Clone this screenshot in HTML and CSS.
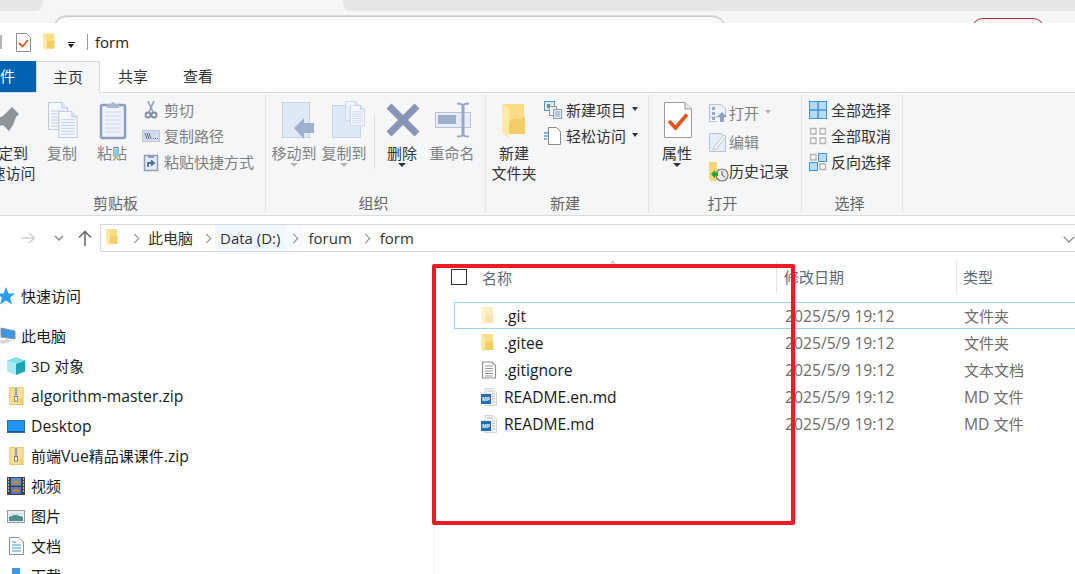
FILE: index.html
```html
<!DOCTYPE html>
<html lang="zh-CN">
<head>
<meta charset="utf-8">
<title>form</title>
<link rel="stylesheet" href="styles.css">
</head>
<body>
<svg class="defs" width="0" height="0" aria-hidden="true">
  <defs>
    <symbol id="folder" viewBox="0 0 24 34">
      <path d="M0 0H22V30H7V34L0 28Z" fill="#fcdd86"/>
      <path d="M9 15H19L23 13V30H7V20Z" fill="#f5cd68"/>
      <path d="M0 0L7 4V34L0 28Z" fill="#fee9a5"/>
    </symbol>
    <symbol id="zip" viewBox="0 0 15 19">
      <path d="M.5.5H14.500V18.500H.5Z" fill="#fbe08f" stroke="#e9c25e"/>
      <path d="M5 0H9V12H5Z" fill="#cfcfcf"/>
      <path d="M6 2H8M6 4H8M6 6H8M6 8H8" stroke="#777" stroke-width="1"/>
      <rect x="5.500" y="10" width="3" height="5" fill="#fff" stroke="#777"/>
      <path d="M11 12H14V18H11Z" fill="#f3cf6a"/>
    </symbol>
    <symbol id="doclines" viewBox="0 0 20 28">
      <path d="M.5.5H14L19.500 6V27.500H.5Z" fill="#f4f7fc" stroke="#bcc9e0"/>
      <path d="M14 .5V6H19.500" fill="#e2e9f5" stroke="#bcc9e0"/>
      <path d="M3 9H17M3 12H17M3 15H17M3 18H17M3 21H17M3 24H17" stroke="#c3cfe3"/>
    </symbol>
  </defs>
</svg>

<div class="chrome">
  <div class="chrome-tabs"><div class="ctab ctab-l"></div><div class="ctab ctab-r"></div></div>
  <div class="chrome-bar"><div class="omni"></div><div class="pill"></div></div>
</div>

<div class="titlebar">
  <span class="tb-stub"></span>
  <svg class="tb-prop" viewBox="0 0 15 19"><path d="M.5.5H10.500L14.500 4.500V18.500H.5Z" fill="#fff" stroke="#8f8f8f"/><path d="M3 10L6.500 13.500L12 7" fill="none" stroke="#e8541c" stroke-width="1.800"/></svg>
  <svg class="tb-folder"><use href="#folder"/></svg>
  <span class="tb-caret"></span>
  <span class="tb-sep"></span>
  <span class="tb-title">form</span>
</div>

<div class="tabs">
  <div class="tab tab-file"><span class="tab-file-text">文件</span></div>
  <div class="tab tab-active">主页</div>
  <div class="tab tab-share">共享</div>
  <div class="tab tab-view">查看</div>
</div>

<div class="ribbon">
  <section class="group g-clip">
    <div class="items">
      <div class="btn btn-pin">
        <div class="lg"><svg class="big" viewBox="0 0 42 42"><path d="M27 6L34 13L31 16L28 24L24 30L18 24L11 26L10 18L18 15L22 11Z" fill="#8d9499"/></svg></div>
        <div class="lbl dark">固定到<br>快速访问</div>
      </div>
      <div class="btn">
        <div class="lg"><svg class="big" viewBox="0 0 42 42"><use href="#doclines" x="7" y="1" width="20" height="28"/><use href="#doclines" x="17" y="10" width="20" height="27"/></svg></div>
        <div class="lbl off">复制</div>
      </div>
      <div class="btn btn-paste">
        <div class="lg"><svg class="big" viewBox="0 0 42 42"><rect x="10" y="4" width="24" height="33" rx="1.500" fill="#eef3fb" stroke="#8d9dbd" stroke-width="2.500"/><path d="M14 11H30M14 15H30M14 19H30M14 23H30M14 27H30M14 31H30" stroke="#c9d6ea"/><path d="M16 3H20Q22 -1 24 3H28V7H16Z" fill="#a9b6cd"/></svg></div>
        <div class="lbl off">粘贴</div>
      </div>
      <div class="list l26 l-clip">
        <div class="row off"><svg class="sm" viewBox="0 0 18 18"><path d="M6 0L11 11M12 0L7 11" stroke="#9aa6bc" stroke-width="1.800"/><circle cx="6" cy="14" r="2.500" fill="none" stroke="#7f8ca6" stroke-width="1.800"/><circle cx="12" cy="14" r="2.500" fill="none" stroke="#7f8ca6" stroke-width="1.800"/></svg>剪切</div>
        <div class="row off"><svg class="sm" viewBox="0 0 18 18"><rect x=".5" y="3.500" width="17" height="11" fill="#d3dcec" stroke="#bcc9e0"/><path d="M3 6L5 12M5 6L7 12M7 6L9 12M11 11.500H12M13 11.500H14M15 11.500H16" stroke="#5d6b87"/></svg>复制路径</div>
        <div class="row off"><svg class="sm" viewBox="0 0 18 18"><rect x="2.500" y="2.500" width="13" height="15" fill="#e6edf8" stroke="#8d9dbd" stroke-width="1.500"/><path d="M6 2H12V5H6Z" fill="#8d9dbd"/><path d="M6 14V10H11M9 7.500L12 10L9 12.500" fill="none" stroke="#4f6fa5" stroke-width="1.800"/></svg>粘贴快捷方式</div>
      </div>
    </div>
    <div class="glabel">剪贴板</div>
  </section>

  <section class="group g-org">
    <div class="items">
      <div class="btn">
        <div class="lg"><svg class="big" viewBox="0 0 42 42"><rect x="9.500" y="1.500" width="27" height="35" fill="#dfe8f6" stroke="#c6d3e8"/><path d="M21 27L31 17V22H41V32H31V38Z" fill="#9fb0cc"/></svg></div>
        <div class="lbl off">移动到<span class="caret c-off"></span></div>
      </div>
      <div class="btn">
        <div class="lg"><svg class="big" viewBox="0 0 42 42"><rect x="9.500" y="4.500" width="28" height="32" fill="#dfe8f6" stroke="#c6d3e8"/><use href="#doclines" x="22" y="0" width="15" height="20"/><use href="#doclines" x="27" y="4" width="15" height="21"/></svg></div>
        <div class="lbl off">复制到<span class="caret c-off"></span></div>
      </div>
      <span class="vsep"></span>
      <div class="btn">
        <div class="lg"><svg class="big" viewBox="0 0 42 42"><path d="M8 5L36 33M36 5L8 33" stroke="#8794b3" stroke-width="7"/></svg></div>
        <div class="lbl dark">删除<span class="caret"></span></div>
      </div>
      <div class="btn">
        <div class="lg"><svg class="big" viewBox="0 0 42 42"><rect x="4.500" y="11.500" width="35" height="15" fill="#e8eef8" stroke="#b5c3dd"/><rect x="7" y="14" width="18" height="9" fill="#9fb0cc"/><path d="M32 3V35" stroke="#99a8c4" stroke-width="3"/><path d="M26 2.500Q32 2.500 32 5Q32 2.500 38 2.500M26 35.500Q32 35.500 32 33Q32 35.500 38 35.500" fill="none" stroke="#99a8c4" stroke-width="2"/></svg></div>
        <div class="lbl off">重命名</div>
      </div>
    </div>
    <div class="glabel">组织</div>
  </section>

  <section class="group g-new">
    <div class="items">
      <div class="btn btn-wide">
        <div class="lg"><svg class="folder-lg"><use href="#folder"/></svg></div>
        <div class="lbl">新建<br>文件夹</div>
      </div>
      <div class="list l26 l-new">
        <div class="row"><svg class="sm" viewBox="0 0 18 18"><rect x=".5" y=".5" width="10" height="9" fill="#d9e9f7" stroke="#5a96c8"/><path d="M3 3H6V7H3Z" fill="#6a9c6a"/><rect x="5.500" y="5.500" width="7" height="9" fill="#f2f2f2" stroke="#999"/><rect x="9.500" y="8.500" width="8" height="9" fill="#e6ecf6" stroke="#8d9dbd"/><path d="M11 11H16M11 13H16M11 15H16" stroke="#8d9dbd"/></svg>新建项目<span class="caret c-in"></span></div>
        <div class="row"><svg class="sm" viewBox="0 0 18 18"><path d="M4.500.5H12.500L16.500 4.500V17.500H4.500Z" fill="#fff" stroke="#8a8a8a"/><path d="M0 6H5M0 9H4M0 12H3" stroke="#1d74c4" stroke-width="1.200"/></svg>轻松访问<span class="caret c-in"></span></div>
      </div>
    </div>
    <div class="glabel">新建</div>
  </section>

  <section class="group g-open">
    <div class="items">
      <div class="btn">
        <div class="lg"><svg class="big" viewBox="0 0 42 42"><path d="M8.500 1.500H29L35.500 8V36.500H8.500Z" fill="#fff" stroke="#9a9a9a"/><path d="M29 1.500V8H35.500" fill="#e8e8e8" stroke="#9a9a9a"/><path d="M13 20L19.500 27L31 13.500" fill="none" stroke="#e8541c" stroke-width="3.500"/></svg></div>
        <div class="lbl">属性<span class="caret"></span></div>
      </div>
      <div class="list l29 l-open">
        <div class="row off"><svg class="sm" viewBox="-2 0 18 18"><path d="M.5.500H12.500L16.500 4.500V13H.5Z" fill="#eef2f9" stroke="#b5c3dd"/><path d="M.5 13V17.500H8" fill="none" stroke="#b5c3dd"/><path d="M3 3H6V6H3ZM3 8H6V11H3ZM3 13H6V16H3Z" fill="#9aa8c2"/><path d="M13 8L18 13H15V18H11V13H8Z" fill="#8ea3c4"/></svg>打开<span class="caret c-off c-in"></span></div>
        <div class="row off"><svg class="sm" viewBox="-2 0 18 18"><path d="M.5.500H12L16.500 4V18.500H.5Z" fill="#e6edf8" stroke="#b5c3dd"/><path d="M5 14L15 2L17 4L7 16L4 17Z" fill="#f8f8f8" stroke="#b5c3dd"/></svg>编辑</div>
        <div class="row"><svg class="sm" viewBox="-2 0 18 18"><path d="M0 0H8V19H3V20L0 17Z" fill="#f7d675"/><circle cx="13" cy="13" r="6" fill="#e8e8e8" stroke="#777" stroke-width="1.200"/><path d="M13 9V13L16 15" fill="none" stroke="#555"/><path d="M2 12L6 8V10.500H9V14H6V16.500Z" fill="#2fa52f"/></svg>历史记录</div>
      </div>
    </div>
    <div class="glabel">打开</div>
  </section>

  <section class="group g-sel">
    <div class="items">
      <div class="list l26">
        <div class="row"><svg class="sm" viewBox="0 0 18 18"><rect x=".5" y=".5" width="17" height="17" fill="#b6dcfd" stroke="#3b97e0"/><path d="M9 0V18M0 9H18" stroke="#3b97e0" stroke-width="1.500"/></svg>全部选择</div>
        <div class="row"><svg class="sm" viewBox="0 0 18 18"><path d="M1.500 1.500H7V7H1.500ZM11 1.500H16.500V7H11ZM1.500 11H7V16.500H1.500ZM11 11H16.500V16.500H11Z" fill="none" stroke="#b4b4b4" stroke-width="1.300"/></svg>全部取消</div>
        <div class="row"><svg class="sm" viewBox="0 0 18 18"><path d="M1.500 1.500H7V7H1.500ZM11 11H16.500V16.500H11Z" fill="none" stroke="#b4b4b4" stroke-width="1.300"/><path d="M9.500.5H17.500V8.500H9.500ZM.5 9.500H8.500V17.500H.5Z" fill="#b6dcfd" stroke="#3b97e0"/></svg>反向选择</div>
      </div>
    </div>
    <div class="glabel">选择</div>
  </section>
</div>

<div class="addr">
  <svg class="nav-btn nb-back" viewBox="0 0 16 16"><path d="M1 8H14M9 3L14.500 8L9 13" fill="none" stroke="#d0d0d0" stroke-width="1.500"/></svg>
  <svg class="nav-btn nb-down" viewBox="0 0 10 8"><path d="M1 2L5 6L9 2" fill="none" stroke="#8a8a8a" stroke-width="1.500"/></svg>
  <svg class="nav-btn nb-up" viewBox="0 0 14 16"><path d="M7 16V2M1 7.500L7 1.500L13 7.500" fill="none" stroke="#6d6d6d" stroke-width="1.600"/></svg>
  <div class="crumbs">
    <svg class="cr-folder"><use href="#folder"/></svg>
    <span class="chev chev-first"></span>
    <span class="crumb">此电脑</span>
    <span class="chev"></span>
    <span class="crumb crumb-hot">Data (D:)</span>
    <span class="chev chev-hot"></span>
    <span class="crumb">forum</span>
    <span class="chev chev-last"></span>
    <span class="crumb">form</span>
    <span class="cr-end"></span>
  </div>
</div>

<main class="main">
  <nav class="side">
    <div class="nrow ntop"><svg class="ni" viewBox="0 0 18 18"><path d="M9 0L11.500 6.500H18L13 10.500L15 17.500L9 13.500L3 17.500L5 10.500L0 6.500H6.500Z" fill="#2b9cf0"/></svg>快速访问</div>
    <div class="nrow ntop npc"><svg class="ni" viewBox="0 0 18 18"><path d="M4 1L18 4V12L4 10Z" fill="#3f96dc" stroke="#7c93a8"/><path d="M0 14L10 12L16 14L6 17Z" fill="#d8d8d8"/></svg>此电脑</div>
    <div class="nrow"><svg class="ni" viewBox="0 0 18 18"><path d="M9 0L18 3.500L9 7L0 3.500Z" fill="#7fe0ea"/><path d="M0 3.500L9 7V18L0 14.500Z" fill="#a8ecef"/><path d="M18 3.500L9 7V18L18 14.500Z" fill="#1aa3b8"/></svg>3D 对象</div>
    <div class="nrow"><svg class="ni"><use href="#zip" x="2" width="15" height="18"/></svg><span class="lat">algorithm-master.zip</span></div>
    <div class="nrow"><svg class="ni" viewBox="0 0 18 18"><rect x=".5" y="3.500" width="17" height="12" fill="#1e96f3" stroke="#3a6ea5"/><path d="M1 14.500H17" stroke="#0f5fa8"/></svg><span class="lat">Desktop</span></div>
    <div class="nrow"><svg class="ni"><use href="#zip" x="2" width="15" height="18"/></svg><span class="mix">前端<span class="lat">Vue</span>精品课课件<span class="lat">.zip</span></span></div>
    <div class="nrow"><svg class="ni" viewBox="0 0 18 18"><rect width="18" height="18" fill="#444"/><path d="M1 2H2M1 5H2M1 8H2M1 11H2M1 14H2M16 2H17M16 5H17M16 8H17M16 11H17M16 14H17" stroke="#ddd" stroke-width="1.500"/><rect x="4" y="1" width="10" height="7.500" fill="#5b8fd0"/><rect x="4" y="10" width="10" height="7" fill="#4f74c8"/><path d="M6 4H12V7H6ZM6 12H12V15H6Z" fill="#c8842a"/></svg>视频</div>
    <div class="nrow"><svg class="ni" viewBox="0 0 18 18"><rect x=".5" y="3.500" width="17" height="12" fill="#e8f0f6" stroke="#9a9a9a"/><path d="M2 10L8 7.500L16 10V14H2Z" fill="#4f8f8a"/><path d="M2 6H16V8H2Z" fill="#cfe3f2"/></svg>图片</div>
    <div class="nrow"><svg class="ni" viewBox="0 0 18 18"><path d="M2.500.5H12L16.500 5V17.500H2.500Z" fill="#fff" stroke="#8f8f8f"/><path d="M5 5H9M5 8H14M5 11H14M5 14H14" stroke="#3a96dd" stroke-width="1.200"/></svg>文档</div>
    <div class="nrow"><svg class="ni" viewBox="0 0 18 18"><rect x="5" y="1" width="8" height="8" fill="#3b97e0"/></svg>下载</div>
  </nav>

  <section class="pane">
    <div class="head">
      <div class="hc hc-name"><span class="check"></span><span>名称</span></div>
      <div class="hc hc-date">修改日期</div>
      <div class="hc hc-type">类型</div>
    </div>
    <span class="sort"></span>
    <div class="files">
      <div class="file focus"><span class="fn"><svg class="fi fi-f hidden-f"><use href="#folder"/></svg><b>.git</b></span><span class="fd">2025/5/9 19:12</span><span class="ft">文件夹</span></div>
      <div class="file"><span class="fn"><svg class="fi fi-f"><use href="#folder"/></svg><b>.gitee</b></span><span class="fd">2025/5/9 19:12</span><span class="ft">文件夹</span></div>
      <div class="file"><span class="fn"><svg class="fi" viewBox="0 0 16 18"><path d="M1.500 1H11L14.500 4.500V17H1.500Z" fill="#fff" stroke="#8f8f8f" stroke-width="1.200"/><path d="M4 5H12M4 7.500H12M4 10H12M4 12.500H12M4 15H12" stroke="#8f8f8f" stroke-width=".9"/></svg><b>.gitignore</b></span><span class="fd">2025/5/9 19:12</span><span class="ft">文本文档</span></div>
      <div class="file"><span class="fn"><svg class="fi" viewBox="0 0 16 18"><path d="M4 .5H12L15.500 4V17.500H4Z" fill="#f4f4f4" stroke="#d4d4d4"/><path d="M6 3H12M11 6H14M11 8.500H14M11 11H14M11 14H14" stroke="#c4c4c4"/><rect y="6" width="10" height="10" fill="#1f6fb5"/><text x="5" y="13" class="mp">MP</text></svg><b>README.en.md</b></span><span class="fd">2025/5/9 19:12</span><span class="ft"><span class="lat">MD</span> 文件</span></div>
      <div class="file"><span class="fn"><svg class="fi" viewBox="0 0 16 18"><path d="M4 .5H12L15.500 4V17.500H4Z" fill="#f4f4f4" stroke="#d4d4d4"/><path d="M6 3H12M11 6H14M11 8.500H14M11 11H14M11 14H14" stroke="#c4c4c4"/><rect y="6" width="10" height="10" fill="#1f6fb5"/><text x="5" y="13" class="mp">MP</text></svg><b>README.md</b></span><span class="fd">2025/5/9 19:12</span><span class="ft"><span class="lat">MD</span> 文件</span></div>
    </div>
    <div class="redbox"></div>
  </section>
</main>
</body>
</html>
```

FILE: styles.css
```css
* { box-sizing: border-box; }
html, body { margin: 0; height: 574px; overflow: hidden; }
body {
  width: 1075px;
  background: #fff;
  color: #333;
  font: 15px/20px "Open Sans", "Noto Sans CJK SC", sans-serif;
}
.defs { position: absolute; }
svg { display: block; flex: none; overflow: visible; }
.lat { font-size: 15.7px; }

/* browser strip */
.chrome { height: 23px; background: #f6f6f6; overflow: hidden; }
.chrome-tabs { display: flex; justify-content: space-between; height: 11px; }
.ctab { background: #e6e6e6; height: 11px; }
.ctab-l { width: 43px; border-bottom-right-radius: 8px; }
.ctab-r { width: 732px; border-bottom-left-radius: 8px; }
.chrome-bar { display: flex; padding-top: 5px; }
.omni { width: 673px; height: 20px; margin-left: 53px; border: 1px solid #c8c8c8; border-radius: 14px 14px 0 0; background: #fafafa; box-shadow: 0 -1px 0 #ddd; }
.pill { width: 74px; height: 20px; margin: 2px 0 0 245px; border: 1px solid #a03040; border-radius: 12px 12px 0 0; }

/* title bar */
.titlebar { height: 38px; display: flex; align-items: center; background: #fff; }
.tb-stub { width: 2px; height: 14px; background: #b5b5b5; }
.tb-prop { width: 15px; height: 19px; margin-left: 14px; }
.tb-folder { width: 12px; height: 18px; margin-left: 12px; }
.tb-caret { width: 7px; height: 5px; margin: 5px 0 0 13px; border-top: 1px solid #222; }
.tb-caret::after { content: ""; display: block; margin: 1px 0 0 0; width: 0; height: 0; border: 3.500px solid transparent; border-top: 4px solid #222; border-bottom: 0; }
.tb-sep { width: 1px; height: 16px; margin-left: 12px; background: #9a9a9a; }
.tb-title { margin-left: 7px; color: #222; }

/* tabs */
.tabs { height: 32px; display: flex; align-items: stretch; border-bottom: 1px solid #dadbdc; background: #fff; }
.tab { height: 31px; line-height: 31px; }
.tab-file { width: 36px; background: #0063b1; color: #fff; overflow: hidden; }
.tab-file-text { display: block; margin-left: -15px; white-space: nowrap; }
.tab-active { width: 64px; height: 32px; text-align: center; border: 1px solid #dadbdc; border-bottom: 0; background: #f5f6f7; }
.tab-share { margin-left: 18px; }
.tab-view { margin-left: 35px; }

/* ribbon */
.ribbon { height: 123px; padding-top: 2px; display: flex; background: #f5f6f7; border-bottom: 1px solid #dadbdc; overflow: hidden; }
.group { height: 118px; display: flex; flex-direction: column; border-right: 1px solid #e2e3e4; flex: none; }
.items { flex: 1; display: flex; min-height: 0; }
.glabel { height: 20px; text-align: center; color: #666; line-height: 20px; }
.g-clip { width: 292px; margin-left: -26px; }
.g-clip .glabel { margin-right: 8px; }
.g-org { width: 220px; padding-left: 3px; }
.g-org .glabel { margin-right: 7px; }
.g-new { width: 163px; padding-left: 2px; }
.g-new .glabel { margin-right: 6px; }
.g-open { width: 153px; padding-left: 3px; }
.g-open .glabel { margin-right: 8px; }
.g-sel { width: 101px; padding-left: 7px; }
.g-sel .glabel { margin-right: 12px; }

.btn { width: 50px; display: flex; flex-direction: column; align-items: center; flex: none; }
.btn-pin { width: 63px; }
.btn-wide { width: 52px; }
.lg { height: 48px; padding-top: 6px; width: 42px; display: flex; justify-content: center; }
.big { width: 42px; height: 42px; }
.folder-lg { width: 24px; height: 34px; margin-top: 3px; }
.lbl { text-align: center; line-height: 20px; color: #333; white-space: nowrap; }
.lbl.off, .row.off { color: #808080; }
.lbl.dark { color: #333; }
.btn .caret { display: block; margin: 0 auto; }
.caret { width: 0; height: 0; border: 4px solid transparent; border-top: 4px solid #333; border-bottom: 0; }
.caret.c-off { border-top-color: #b4b4b4; }
.caret.c-in { display: inline-block; border-width: 4px 3.500px 0; margin-left: 2px; margin-top: -2px; }
.vsep { width: 1px; height: 55px; margin: 19px 2px 0 5px; background: #e0e1e2; flex: none; }

.list { display: flex; flex-direction: column; flex: none; }
.l26 { padding-top: 2px; }
.l26 .row { height: 26px; }
.l29 { padding-top: 3px; }
.l29 .row { height: 29px; }
.l-clip { margin-left: 5px; }
.l-new { margin-left: 4px; }
.l-open { margin-left: 5px; }
.row { display: flex; align-items: center; gap: 4px; white-space: nowrap; color: #333; }
.sm { width: 18px; height: 18px; }

/* address */
.addr { height: 36px; padding-top: 8px; display: flex; align-items: center; background: #fff; }
.nav-btn { flex: none; }
.nb-back { width: 16px; height: 16px; margin-left: 20px; }
.nb-down { width: 10px; height: 8px; margin-left: 18px; }
.nb-up { width: 14px; height: 16px; margin-left: 14px; }
.crumbs { flex: 1; height: 28px; margin: 0 -10px 0 8px; display: flex; align-items: stretch; border: 1px solid #d9d9d9; }
.cr-folder { width: 12px; height: 17px; margin: 4px 0 0 5px; }
.crumb { padding: 0 5px; line-height: 26px; color: #333; white-space: nowrap; }
.crumb-hot { background: #f0f7fe; }
.chev { width: 17px; position: relative; flex: none; }
.chev::after { content: ""; position: absolute; left: 5px; top: 10px; width: 6px; height: 6px; border-top: 1.500px solid #8a8a8a; border-right: 1.500px solid #8a8a8a; transform: rotate(45deg); }
.chev-first { margin-left: 8px; }
.chev-hot { width: 18px; background: #f7fbff; }
.chev-last { width: 18px; }
.cr-end { margin-left: auto; width: 20px; position: relative; }
.cr-end::after { content: ""; position: absolute; left: 1px; top: 8px; width: 7px; height: 7px; border-right: 1.500px solid #777; border-bottom: 1.500px solid #777; transform: rotate(45deg); }

/* main */
.main { display: flex; height: 322px; background: #fff; }
.side { width: 434px; flex: none; padding-top: 29px; border-right: 1px solid #f0f0f0; }
.nrow { height: 30px; padding-left: 7px; display: flex; align-items: center; gap: 6px; color: #1a1a1a; white-space: nowrap; }
.ntop { margin-left: -10px; }
.npc { margin-top: 10px; }
.ni { width: 18px; height: 18px; }

.pane { flex: 1; min-width: 0; padding-top: 9px; position: relative; }
.head { height: 33px; display: flex; color: #5c6a7c; }
.hc { height: 33px; line-height: 32px; white-space: nowrap; flex: none; }
.hc-name { width: 343px; padding-left: 17px; display: flex; align-items: center; gap: 15px; border-right: 1px solid #e5e5e5; }
.hc-date { width: 180px; padding-left: 7px; border-right: 1px solid #e5e5e5; }
.hc-type { padding-left: 6px; }
.check { width: 16px; height: 16px; border: 1px solid #333; background: #fff; margin-top: -1px; }
.sort { position: absolute; left: 176px; top: 10px; width: 7px; height: 4px; border-top: 1px solid #999; border-left: 1px solid #999; transform: rotate(45deg) scale(.7); }

.files { margin: 8px 0 0 20px; }
.file { height: 27px; padding-left: 26px; display: grid; grid-template-columns: 304px 179px 1fr; align-items: center; border: 1px solid transparent; border-right: 0; white-space: nowrap; }
.file.focus { border-color: #99d1ff; }
.fn { display: flex; align-items: center; gap: 7px; }
.fn b { font-weight: 400; font-size: 15.6px; color: #1a1a1a; }
.fd { color: #6d6d6d; font-size: 15.7px; }
.ft { color: #6d6d6d; }
.fi { width: 16px; height: 18px; }
.fi-f { width: 13px; height: 18px; margin-right: 3px; }
.hidden-f { opacity: .5; }
.mp { font: 700 5px/1 "Open Sans", sans-serif; fill: #fff; text-anchor: middle; }

.redbox { position: absolute; left: -2px; top: 12px; width: 363px; height: 261px; border: 4px solid #ed1c24; border-radius: 2px; pointer-events: none; }
```
